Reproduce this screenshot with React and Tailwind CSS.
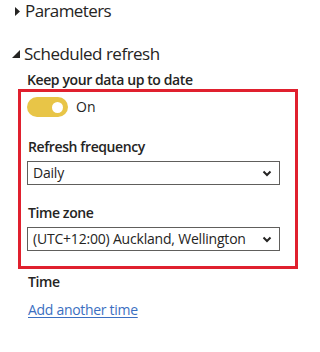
import React from 'react'

const Chevron = () => (
  <svg width="10" height="7" viewBox="0 0 10 7" className="shrink-0">
    <path d="M1.5 1.5 L5 5 L8.5 1.5" fill="none" stroke="#252423" strokeWidth="2" />
  </svg>
)

const Dropdown = ({ value }) => (
  <div className="flex h-[24px] w-[253px] items-center justify-between border border-[#605e5c] pl-[5px] pr-[7px] text-[14px] tracking-[-0.2px] text-[#252423]">
    <span className="leading-none">{value}</span>
    <Chevron />
  </div>
)

const Field = ({ label, className, children }) => (
  <div className={`flex flex-col ${className}`}>
    <div className="pl-[1px] text-[14px] font-semibold leading-[20px] tracking-[-0.4px] text-[#252423]">{label}</div>
    <div className="mt-[4px]">{children}</div>
  </div>
)

export default function App() {
  return (
    <div
      className="h-[352px] w-[320px] overflow-hidden bg-white text-[#252423]"
      style={{ fontFamily: '"Open Sans", "Noto Sans", sans-serif' }}
    >
      <div className="flex h-[22px] items-center gap-[5px] pl-[15px]">
        <svg width="5" height="9" viewBox="0 0 5 9">
          <path d="M0 0 L5 4.5 L0 9 Z" fill="#252423" />
        </svg>
        <span className="text-[17px] leading-[22px] tracking-[-0.6px]">Parameters</span>
      </div>

      <div className="mt-[21px] flex h-[22px] items-center gap-[4px] pl-[12px]">
        <svg width="8" height="8" viewBox="0 0 8 8">
          <path d="M8 0 L8 8 L0 8 Z" fill="#252423" />
        </svg>
        <span className="text-[17px] leading-[22px] tracking-[-0.5px]">Scheduled refresh</span>
      </div>

      <div className="mt-[5px] pl-[27px] text-[14px] font-semibold leading-[20px] tracking-[-0.4px]">
        Keep your data up to date
      </div>

      <div className="-mt-[1px] ml-[18px] flex w-[280px] flex-col border-[3px] border-[#e0202e] pb-[15px] pl-[6px] pt-[5px]">
        <div className="flex items-center gap-[8px]">
          <div className="flex h-[20px] w-[41px] items-center justify-end rounded-full bg-[#e8c547] pr-[5px]">
            <div className="h-[11px] w-[11px] rounded-full bg-white" />
          </div>
          <span className="text-[14px] leading-[20px]">On</span>
        </div>
        <Field label="Refresh frequency" className="mt-[20px]">
          <Dropdown value="Daily" />
        </Field>
        <Field label="Time zone" className="mt-[18px]">
          <Dropdown value="(UTC+12:00) Auckland, Wellington" />
        </Field>
      </div>

      <div className="mt-[3px] pl-[28px] text-[14px] font-semibold leading-[20px] tracking-[-0.4px]">Time</div>
      <div className="mt-[5px] pl-[28px]">
        <a href="#" className="text-[14px] leading-[20px] tracking-[-0.3px] text-[#3b6fc1] underline underline-offset-2">
          Add another time
        </a>
      </div>
    </div>
  )
}
